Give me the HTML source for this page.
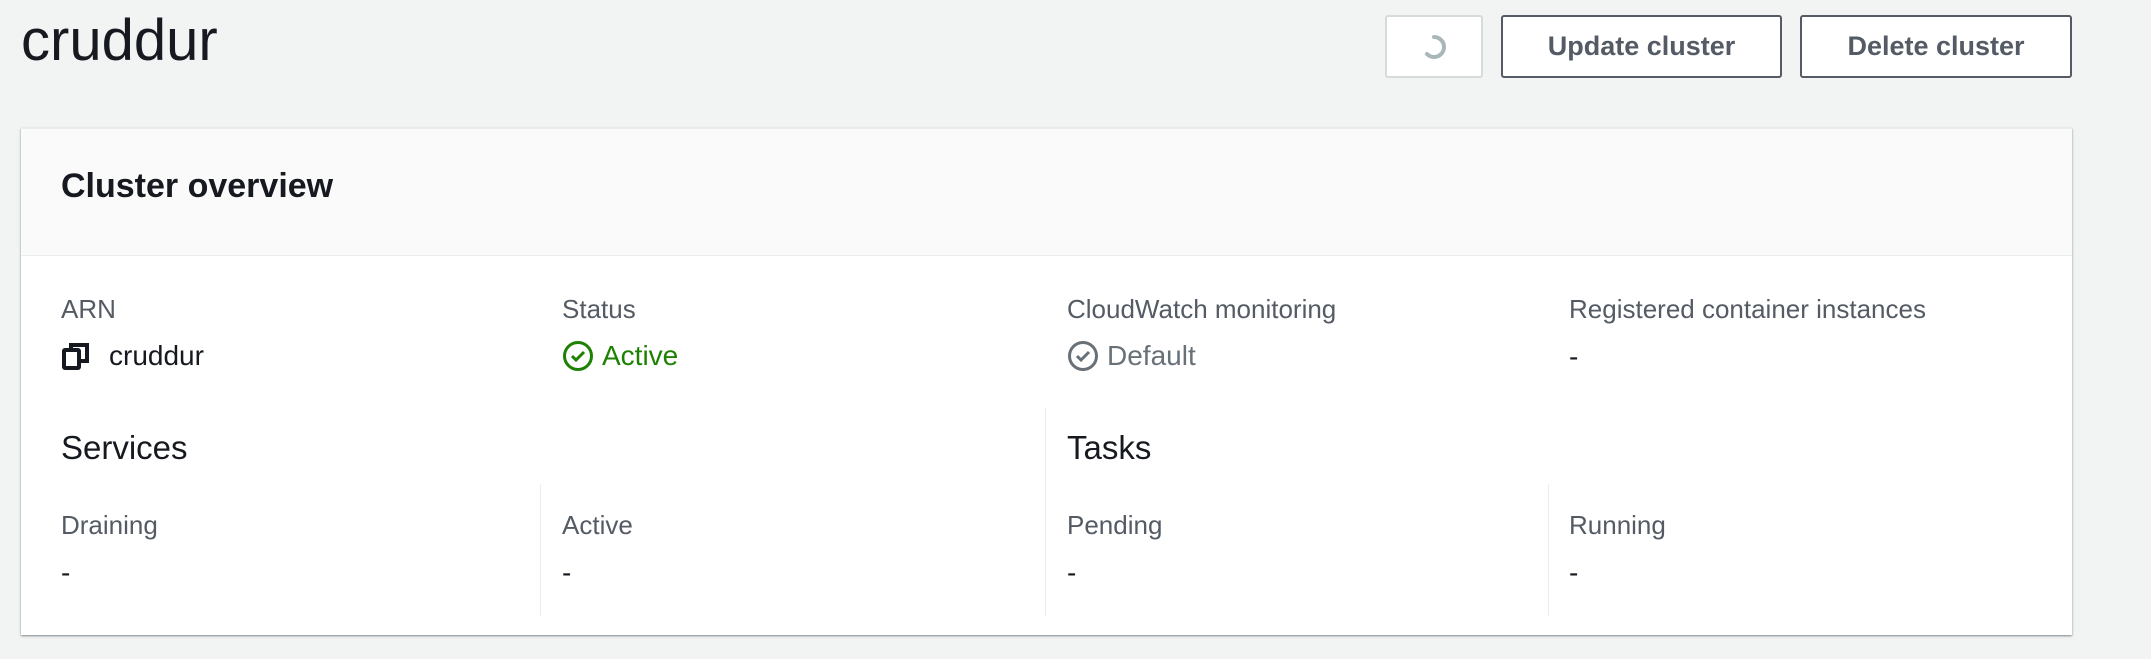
<!DOCTYPE html>
<html><head><meta charset="utf-8"><style>
*{margin:0;padding:0;box-sizing:border-box}
body{width:2151px;height:659px;background:#f2f3f3;font-family:"Liberation Sans",sans-serif;position:relative;overflow:hidden;color:#16191f}
.a{position:absolute;white-space:nowrap}
.btn{position:absolute;top:15px;height:63px;border:2px solid #545b64;border-radius:3px;background:#fff;color:#545b64;font-weight:bold;font-size:27px;display:flex;align-items:center;justify-content:center}
.panel{position:absolute;left:21px;top:128px;width:2051px;height:507px;background:#fff;box-shadow:0 1px 2px rgba(0,28,36,.5);border-top:1px solid #eaeded}
.hdr{position:absolute;left:0;top:0;width:100%;height:127px;background:#fafafa;border-bottom:1px solid #eaeded}
.lbl{font-size:26px;color:#545b64}
.val{font-size:28px;color:#16191f}
.h2{font-size:33px;color:#16191f}
.vl{position:absolute;width:1px;background:#eaeded}
</style></head><body>
<div class="a" style="left:21px;top:7px;font-size:58px;color:#16191f">cruddur</div>
<div class="btn" style="left:1385px;width:98px;border:2px solid #d5dbdb"><svg width="30" height="30" viewBox="0 0 30 30"><path d="M15 5 A10 10 0 0 1 15 25 M15 25 A10 10 0 0 1 8 22" fill="none" stroke="#aab7b8" stroke-width="4" stroke-linecap="round"/></svg></div>
<div class="btn" style="left:1501px;width:281px">Update cluster</div>
<div class="btn" style="left:1800px;width:272px">Delete cluster</div>
<div class="panel">
<div class="hdr"></div>
<div class="a" style="left:40px;top:38px;font-size:34px;font-weight:bold">Cluster overview</div>
<div class="a lbl" style="left:40px;top:165px">ARN</div>
<div class="a val" style="left:40px;top:211px;display:flex;align-items:center"><svg width="30" height="30" viewBox="0 0 30 30" style="margin-right:18px"><rect x="3" y="9" width="15" height="18" rx="1" fill="none" stroke="#16191f" stroke-width="4"/><path d="M10 8V4h16v16h-6" fill="none" stroke="#16191f" stroke-width="4"/></svg>cruddur</div>
<div class="a lbl" style="left:541px;top:165px">Status</div>
<div class="a val" style="left:541px;top:211px;color:#1d8102;display:flex;align-items:center"><svg width="32" height="32" viewBox="0 0 32 32" style="margin-right:8px"><circle cx="16" cy="16" r="13.5" fill="none" stroke="#1d8102" stroke-width="3"/><path d="M10 16l4 4 8-8" fill="none" stroke="#1d8102" stroke-width="3"/></svg>Active</div>
<div class="a lbl" style="left:1046px;top:165px">CloudWatch monitoring</div>
<div class="a val" style="left:1046px;top:211px;color:#687078;display:flex;align-items:center"><svg width="32" height="32" viewBox="0 0 32 32" style="margin-right:8px"><circle cx="16" cy="16" r="13.5" fill="none" stroke="#687078" stroke-width="3"/><path d="M10 16l4 4 8-8" fill="none" stroke="#687078" stroke-width="3"/></svg>Default</div>
<div class="a lbl" style="left:1548px;top:165px">Registered container instances</div>
<div class="a val" style="left:1548px;top:212px">-</div>
<div class="vl" style="left:1024px;top:279px;height:208px"></div>
<div class="vl" style="left:519px;top:355px;height:132px"></div>
<div class="vl" style="left:1527px;top:355px;height:132px"></div>
<div class="a h2" style="left:40px;top:300px">Services</div>
<div class="a h2" style="left:1046px;top:300px">Tasks</div>
<div class="a lbl" style="left:40px;top:381px">Draining</div>
<div class="a val" style="left:40px;top:428px">-</div>
<div class="a lbl" style="left:541px;top:381px">Active</div>
<div class="a val" style="left:541px;top:428px">-</div>
<div class="a lbl" style="left:1046px;top:381px">Pending</div>
<div class="a val" style="left:1046px;top:428px">-</div>
<div class="a lbl" style="left:1548px;top:381px">Running</div>
<div class="a val" style="left:1548px;top:428px">-</div>
</div>
</body></html>
